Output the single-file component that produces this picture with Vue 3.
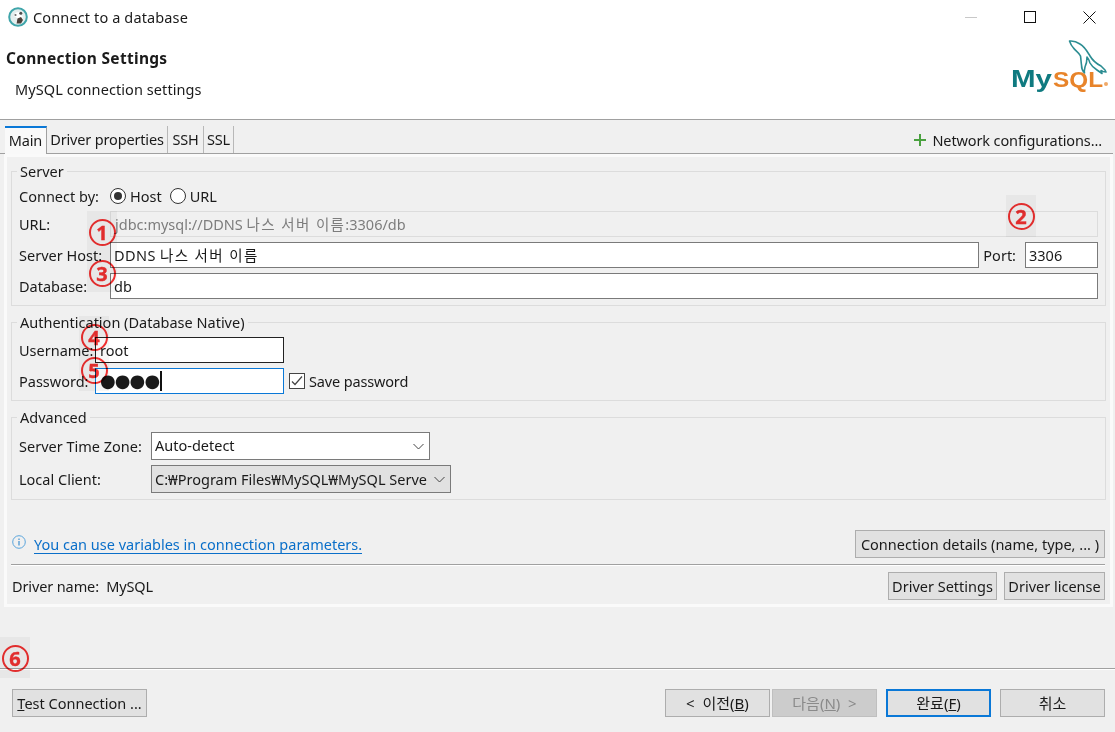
<script setup>
const tabs = [
  { t: 'Driver properties', w: 'w1' },
  { t: 'SSH', w: 'w2' },
  { t: 'SSL', w: 'w3' }
]
const patches = [
  { cls: 'p1', list: ['1', '3'] },
  { cls: 'p2', list: ['2'] },
  { cls: 'p3', list: ['4', '5'] },
  { cls: 'p4', list: ['6'] }
]
</script>

<template>
  <div class="win">
    <header class="top">
      <div class="titlebar">
        <svg class="appicon" width="20" height="20" viewBox="0 0 20 20">
          <circle cx="10" cy="10" r="8.800" fill="#e4eeee" stroke="#3fa5aa" stroke-width="2" />
          <path d="M5.500 9 8 5.500 11 5l2.500 1-1 2 2 1v5l-2 2.500H7.500L9.500 12 8 10z" fill="#fff" />
          <path d="M8.500 16.500 9.500 11.500l3.500-1.500 2 3-2 3.500z" fill="#4a403a" />
          <circle cx="12.800" cy="6.200" r="1.500" fill="#4d4d4d" />
          <circle cx="7.500" cy="8" r="1.100" fill="#6d6d6d" />
        </svg>
        <span class="title">Connect to a database</span>
        <div class="wctl">
          <span class="wmin"></span>
          <span class="wmax"></span>
          <svg width="13" height="13" viewBox="0 0 13 13"><path d="M.5.5l12 12M12.500.5l-12 12" stroke="#111" stroke-width="1" fill="none" /></svg>
        </div>
      </div>
      <div class="headrow">
        <div class="headtext">
          <div class="h1">Connection Settings</div>
          <div class="h2">MySQL connection settings</div>
        </div>
        <svg class="logo" width="104" height="56" viewBox="0 0 104 56">
          <path d="M62 1c3 0 6 1 9 3 5 3 7 7 10 12 3 5 7 8 11 10l4 4 1 2-3-.5-2-1 1 3-5-3.500c-3-2-5.500-4-7-7-1-3-2-5-3-6 0 4-.5 7-2 10-.5 2-1 4-.5 6-2-2-3-5-3-8-.5-3-.5-6-1-9-2-4-5-5-7-8-2-2-3-4-4-7z" fill="none" stroke="#2c8d92" stroke-width="1.600" stroke-linejoin="round" />
          <text x="2" y="47" class="lg-my" textLength="41" lengthAdjust="spacingAndGlyphs">My</text>
          <text x="44" y="47" class="lg-sql" textLength="50" lengthAdjust="spacingAndGlyphs">SQL</text>
          <circle cx="97" cy="44" r="2" fill="#e8842a" opacity=".7" />
        </svg>
      </div>
    </header>

    <section class="tabbar">
      <div class="tab active">Main</div>
      <div v-for="t in tabs" :key="t.t" class="tab" :class="t.w">{{ t.t }}</div>
      <div class="netcfg">
        <svg width="12" height="12" viewBox="0 0 12 12"><path d="M6 0v12M0 6h12" stroke="#4aa13f" stroke-width="2" /></svg>
        <span class="nettext">Network configurations...</span>
      </div>
    </section>

    <main class="panel">
      <div class="group server">
        <div class="legend">Server</div>
        <div class="row connect">
          <span class="lbl-a">Connect by:</span>
          <span class="radio on"></span><span class="rt">Host</span>
          <span class="radio"></span><span class="rt">URL</span>
        </div>
        <div class="row r-url">
          <span class="lbl">URL:</span>
          <div class="input disabled">jdbc:mysql://DDNS <span class="ko">나스 서버 이름</span>:3306/db</div>
        </div>
        <div class="row r-host">
          <span class="lbl">Server Host:</span>
          <div class="input grow wide">DDNS <span class="ko">나스 서버 이름</span></div>
          <span class="port">Port:</span>
          <div class="input portin">3306</div>
        </div>
        <div class="row r-db">
          <span class="lbl">Database:</span>
          <div class="input grow">db</div>
        </div>
      </div>

      <div class="group auth">
        <div class="legend">Authentication (Database Native)</div>
        <div class="row r-user">
          <span class="lbl2">Username:</span>
          <div class="input cred dark">root</div>
        </div>
        <div class="row r-pass">
          <span class="lbl2">Password:</span>
          <div class="input cred focus"><span class="dots">●●●●</span><span class="caret"></span></div>
          <span class="check">
            <svg width="16" height="16" viewBox="0 0 16 16"><rect x=".5" y=".5" width="15" height="15" fill="#fff" stroke="#444" /><path d="M3 8.500l3 3 7-8" fill="none" stroke="#444" stroke-width="1.200" /></svg>
          </span>
          <span class="savepw">Save password</span>
        </div>
      </div>

      <div class="group adv">
        <div class="legend">Advanced</div>
        <div class="row r-tz">
          <span class="lbl3">Server Time Zone:</span>
          <div class="combo">
            <span class="ctext">Auto-detect</span>
            <svg width="11" height="7" viewBox="0 0 11 7"><path d="M.5 1l5 5 5-5" fill="none" stroke="#444" /></svg>
          </div>
        </div>
        <div class="row r-lc">
          <span class="lbl3">Local Client:</span>
          <div class="combo gray">
            <span class="clip">C:₩Program Files₩MySQL₩MySQL Serve</span>
            <svg width="11" height="7" viewBox="0 0 11 7"><path d="M.5 1l5 5 5-5" fill="none" stroke="#444" /></svg>
          </div>
        </div>
      </div>

      <div class="linkrow">
        <svg width="14" height="14" viewBox="0 0 14 14"><circle cx="7" cy="7" r="6.300" fill="none" stroke="#5aa5dc" /><path d="M7 6v4.500M7 3.500v1.500" stroke="#3c8fd0" stroke-width="1.200" /></svg>
        <a class="link">You can use variables in connection parameters.</a>
        <button class="btn details">Connection details (name, type, ... )</button>
      </div>
      <div class="driver">
        <span class="dname">Driver name:&nbsp; MySQL</span>
        <button class="btn ds">Driver Settings</button>
        <button class="btn dl">Driver license</button>
      </div>
    </main>

    <div class="spacer"></div>

    <footer class="foot">
      <button class="btn test"><u>T</u>est Connection ...</button>
      <div class="navs">
        <button class="btn nav">&lt;&nbsp; 이전(<u>B</u>)</button>
        <button class="btn nav off">다음(<u>N</u>) &nbsp;&gt;</button>
        <button class="btn nav def">완료(<u>F</u>)</button>
        <button class="btn nav">취소</button>
      </div>
    </footer>

    <div v-for="p in patches" :key="p.cls" class="patch" :class="p.cls">
      <span v-for="n in p.list" :key="n" class="mark">{{ n }}</span>
    </div>
  </div>
</template>

<style>
html, body { margin: 0; background: #f0f0f0; }
</style>

<style scoped>
.win {
  position: relative;
  width: 1115px;
  height: 732px;
  overflow: hidden;
  display: flex;
  flex-direction: column;
  background: #f0f0f0;
  color: #1a1a1a;
  font: 14.500px/20px "Noto Sans", "Noto Sans CJK KR", sans-serif;
}
.top { background: #fff; height: 120px; box-sizing: border-box; border-bottom: 1px solid #a0a0a0; flex: none; }
.titlebar { height: 34px; display: flex; align-items: center; padding-left: 8px; }
.appicon { margin-right: 5px; }
.title { letter-spacing: .13px; }
.wctl { margin-left: auto; display: flex; align-items: center; }
.wmin { width: 12px; height: 1px; background: #c8c8c8; margin-right: 47px; }
.wmax { width: 12px; height: 12px; border: 1px solid #111; box-sizing: border-box; margin-right: 47px; }
.wctl svg { margin-right: 19px; }
.headrow { display: flex; justify-content: space-between; }
.h1 { font-weight: 700; font-size: 15.500px; letter-spacing: .3px; margin: 14px 0 0 6px; }
.h2 { margin: 11px 0 0 15px; letter-spacing: .08px; }
.logo { margin: 6px 2px 0 0; }
.lg-my { font: 700 23px "Liberation Sans", sans-serif; fill: #0f7a80; }
.lg-sql { font: 700 22px "Liberation Sans", sans-serif; fill: #e8842a; }

.tabbar {
  height: 34px;
  box-sizing: border-box;
  padding: 6px 2px 0 5px;
  display: flex;
  flex: none;
  border-bottom: 1px solid #a0a0a0;
  margin-right: 2px;
}
.tab {
  height: 27px;
  line-height: 27px;
  text-align: center;
  letter-spacing: -.16px;
  border-right: 1px solid #b8b8b8;
  box-sizing: border-box;
}
.w1 { width: 121px; }
.w2 { width: 36px; }
.w3 { width: 30px; }
.tab.active {
  width: 42px;
  background: #f9f9f9;
  border-top: 2px solid #0a78d7;
  border-right: 1px solid #a0a0a0;
  height: 28px;
  margin-bottom: -1px;
  line-height: 25px;
  position: relative;
}
.netcfg { margin-left: auto; display: flex; align-items: center; gap: 6px; padding-right: 9px; }
.nettext { letter-spacing: -.12px; }

.panel {
  margin: 0 2px 0 4px;
  padding: 14px 4px 0 4px;
  height: 453px;
  box-sizing: border-box;
  border: 3px solid #fafafa;
  flex: none;
}
.group { border: 1px solid #dcdcdc; position: relative; box-sizing: border-box; width: 1095px; padding: 0 7px; }
.legend {
  position: absolute;
  top: -11px;
  left: 5px;
  padding: 0 3px;
  background: #f0f0f0;
  line-height: 20px;
}
.server { height: 135px; padding-top: 14px; }
.auth { height: 79px; margin-top: 16px; padding-top: 14px; }
.adv { height: 83px; margin-top: 16px; padding-top: 14px; }

.row { display: flex; align-items: center; }
.connect { height: 20px; }
.lbl-a { width: 91px; }
.radio {
  width: 16px; height: 16px; box-sizing: border-box; border-radius: 50%;
  border: 1px solid #333; background: #fff; margin-right: 4px; position: relative;
}
.radio.on::after {
  content: ""; position: absolute; left: 3px; top: 3px; width: 8px; height: 8px; border-radius: 50%; background: #333;
}
.rt { margin-right: 8px; }
.r-url { margin-top: 5px; }
.r-host, .r-db { margin-top: 5px; }
.lbl { width: 91px; flex: none; }
.input {
  height: 26px;
  box-sizing: border-box;
  border: 1px solid #7a7a7a;
  background: #fff;
  padding-left: 3px;
  line-height: 24px;
  white-space: nowrap;
}
.ko { letter-spacing: 1.400px; }
.wide { letter-spacing: .4px; }
.grow { flex: 1; }
.disabled { flex: 1; background: #f0f0f0; border-color: #dcdcdc; color: #7d7d7d; padding-left: 4px; }
.port { margin: 0 9px 0 4px; }
.portin { width: 73px; }

.r-pass { margin-top: 5px; }
.lbl2 { width: 76px; flex: none; }
.cred { width: 189px; }
.dark { border-color: #222; padding-left: 4px; }
.focus { border-color: #0a78d7; display: flex; align-items: center; padding-left: 4px; }
.dots { font: 18px/24px "DejaVu Sans", sans-serif; letter-spacing: -.9px; }
.caret { width: 1.500px; height: 20px; background: #111; margin-left: 1px; }
.check { margin: 0 4px 0 5px; height: 16px; }
.savepw { letter-spacing: -.15px; }

.lbl3 { width: 132px; flex: none; }
.combo {
  height: 28px;
  width: 279px;
  box-sizing: border-box;
  border: 1px solid #7a7a7a;
  background: #fff;
  display: flex;
  align-items: center;
  justify-content: space-between;
  padding: 0 5px 0 3px;
  white-space: nowrap;
}
.ctext { padding-bottom: 2px; }
.combo.gray { width: 300px; background: #e1e1e1; }
.clip { width: 272px; overflow: hidden; }
.r-lc { margin-top: 5px; }

.linkrow {
  height: 28px;
  margin-top: 30px;
  display: flex;
  align-items: center;
  width: 1094px;
  padding-bottom: 6px;
}
.linkrow > svg { margin: 0 8px 0 1px; position: relative; top: -2px; }
.link { color: #0a6fc9; border-bottom: 1px solid #0a6fc9; line-height: 17px; position: relative; top: 1px; }
.btn {
  font: inherit;
  color: inherit;
  height: 28px;
  padding: 0;
  border: 1px solid #adadad;
  background: #e1e1e1;
  box-sizing: border-box;
  white-space: nowrap;
}
.details { margin-left: auto; width: 250px; }
.driver {
  border-top: 1px solid #a0a0a0;
  box-shadow: inset 0 1px 0 #fff;
  width: 1094px;
  padding-top: 7px;
  box-sizing: border-box;
  display: flex;
  align-items: flex-start;
}
.dname { line-height: 28px; padding-left: 1px; letter-spacing: -.12px; }
.ds { margin-left: auto; width: 109px; }
.dl { margin-left: 7px; width: 101px; }

.spacer { flex: 1; border-bottom: 1px solid #a0a0a0; box-shadow: 0 1px 0 #fff; }
.foot {
  height: 63px;
  flex: none;
  box-sizing: border-box;
  padding: 20px 10px 0 12px;
  display: flex;
  justify-content: space-between;
  align-items: flex-start;
}
.test { width: 135px; }
.navs { display: flex; }
.nav { width: 105px; margin-left: 2px; font-size: 15px; }
.nav:nth-child(3) { margin-left: 9px; }
.nav:nth-child(4) { margin-left: 9px; }
.off { background: #cccccc; border-color: #bfbfbf; color: #8a8a8a; }
.def { border: 2px solid #0a78d7; }

.patch {
  position: absolute;
  background: #f6f6f6;
  mix-blend-mode: multiply;
  width: 30px;
  box-sizing: border-box;
  display: flex;
  flex-direction: column;
  align-items: center;
}
.p1 { left: 87px; top: 211px; height: 81px; padding-top: 8px; gap: 14px; }
.p2 { left: 1006px; top: 195px; height: 42px; padding-top: 8px; }
.p3 { left: 79px; top: 316px; height: 75px; padding-top: 8px; gap: 6px; }
.p4 { left: 0; top: 637px; height: 41px; padding-top: 8px; }
.mark {
  width: 27px;
  height: 27px;
  flex: none;
  box-sizing: border-box;
  border: 2px solid #f03030;
  border-radius: 50%;
  color: #f03030;
  text-align: center;
  font: 700 20px/23px "Noto Sans", sans-serif;
  -webkit-text-stroke: .4px #f03030;
}
</style>
